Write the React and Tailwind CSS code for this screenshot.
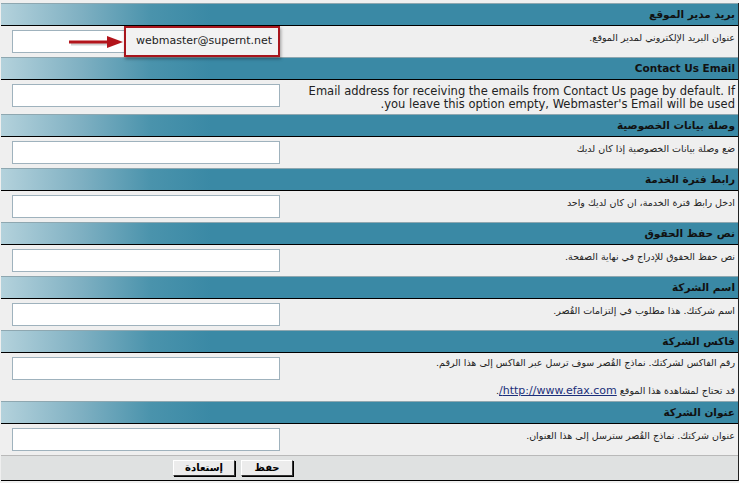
import React from 'react';

const sections = [
    { title: 'بريد مدير الموقع', desc: 'عنوان البريد الإلكتروني لمدير الموقع.' },
    {
        title: 'Contact Us Email',
        en: true,
        desc: (
            <>
                Email address for receiving the emails from Contact Us page by default. If
                <br />
                you leave this option empty, Webmaster's Email will be used.
            </>
        ),
    },
    { title: 'وصلة بيانات الخصوصية', desc: 'ضع وصلة بيانات الخصوصية إذا كان لديك' },
    { title: 'رابط فترة الخدمة', desc: 'ادخل رابط فترة الخدمة، ان كان لديك واحد' },
    { title: 'نص حفظ الحقوق', desc: 'نص حفظ الحقوق للإدراج في نهاية الصفحة.' },
    { title: 'اسم الشركة', desc: 'اسم شركتك. هذا مطلوب في إلتزامات القُصر.' },
    {
        title: 'فاكس الشركة',
        desc: (
            <>
                رقم الفاكس لشركتك. نماذج القُصر سوف ترسل عبر الفاكس إلى هذا الرقم.
                <br />
                <br />
                قد تحتاج لمشاهدة هذا الموقع{' '}
                <a href="#" className="text-[#1b2f7a] underline text-[11px]">http://www.efax.com/</a>.
            </>
        ),
    },
    { title: 'عنوان الشركة', desc: 'عنوان شركتك. نماذج القُصر سترسل إلى هذا العنوان.' },
];

function Header({ title }) {
    return (
        <div className="h-[23px] border-t border-t-[#8ea7b0] border-b border-b-black bg-[linear-gradient(to_right,#b4d2dc_0px,#7fb0c2_80px,#4a93ac_150px,#3a89a5_210px,#3a89a5_100%)] pr-[3px] flex items-center">
            <span className="text-[10.5px] font-bold text-[#111]">{title}</span>
        </div>
    );
}

function Row({ desc, index, en }) {
    const tall = index === 6;
    return (
        <div className={`relative flex bg-[#efefef] ${tall ? 'h-[48px]' : en ? 'h-[34px]' : 'h-[31px]'}`}>
            <div
                className={`flex-1 pr-[3px] text-[#222] ${
                    en ? 'pt-[5px] text-[11.5px] leading-[13px]' : tall ? 'pt-[3px] text-[9.5px] leading-[14px]' : 'pt-[5px] text-[9.5px] leading-[13px]'
                }`}
            >
                {desc}
            </div>
            <div className="w-[293px] pt-[4px] flex justify-end items-start">
                <input
                    type="text"
                    className="ml-[11px] w-[268px] h-[23px] bg-white border border-[#9fb2bd] outline-none"
                />
            </div>

            {index === 0 && (
                <>
                    <svg className="absolute left-[66px] top-[9px]" width="58" height="16" viewBox="0 0 58 16">
                        <path d="M4 9 H44" stroke="#7a7a7a" strokeOpacity="0.35" strokeWidth="3" />
                        <path d="M2 7 H44" stroke="#b3141b" strokeWidth="3" />
                        <path d="M40 1 L56 7 L40 13 Z" fill="#b3141b" />
                    </svg>
                    <div className="absolute left-[123px] top-0 w-[156px] h-[31px] border-2 border-[#a8161d] bg-[#f2f2f2] shadow-[1px_2px_3px_rgba(0,0,0,0.35)] flex items-center pl-[10px]" dir="ltr">
                        <span className="text-[11px] text-[#222]">webmaster@supernt.net</span>
                    </div>
                </>
            )}
        </div>
    );
}

export default function App() {
    return (
        <div dir="rtl" className="w-[739px] h-[483px] bg-[#efefef] pt-[3px] font-['DejaVu_Sans',sans-serif] overflow-hidden">
            <div className="w-[738px] border-r border-r-[#222]">
                {sections.map((s, i) => (
                    <div key={i}>
                        <Header title={s.title} />
                        <Row desc={s.desc} index={i} en={s.en} />
                    </div>
                ))}

                {/* Buttons */}
                <div className="flex h-[26px] bg-[#dfe1e1] border-t border-t-[#b9b9b9] border-b border-b-black">
                    <div className="flex-1" />
                    <div className="w-[293px] flex items-center gap-[6px] pr-[1px]">
                        <button className="w-[52px] h-[16px] bg-[#ececec] border border-t-white border-l-white border-b-[#333] border-r-[#333] shadow-[1px_1px_0_#000] text-[10px] font-bold text-black leading-none">
                            حفظ
                        </button>
                        <button className="w-[62px] h-[16px] bg-[#ececec] border border-t-white border-l-white border-b-[#333] border-r-[#333] shadow-[1px_1px_0_#000] text-[10px] font-bold text-black leading-none">
                            إستعادة
                        </button>
                    </div>
                </div>
            </div>
        </div>
    );
}
